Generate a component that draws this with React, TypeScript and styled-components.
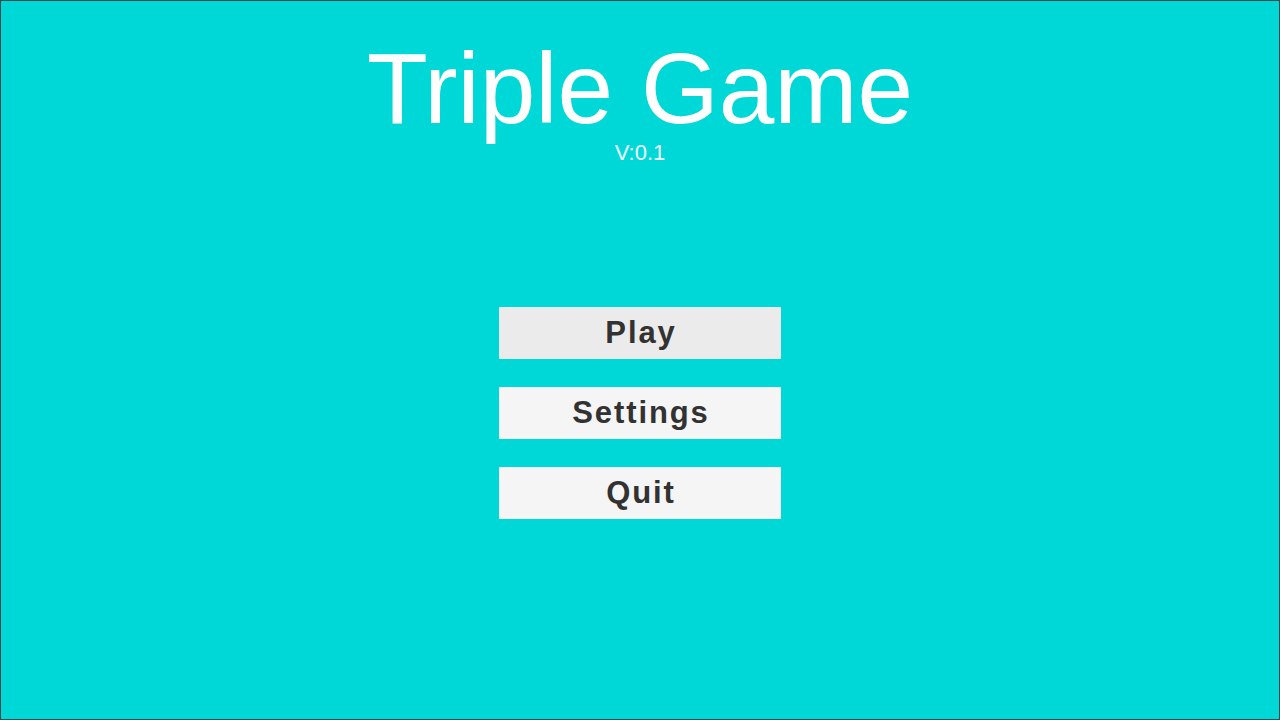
import React from "react";
import styled, { createGlobalStyle } from "styled-components";

const GlobalStyle = createGlobalStyle`
  html, body {
    margin: 0;
    padding: 0;
    background: #00d8d8;
  }
  * {
    box-sizing: border-box;
  }
`;

const Screen = styled.div`
  width: 1280px;
  height: 720px;
  background: #00d8d8;
  border: 1px solid #2a4a4a;
  display: flex;
  flex-direction: column;
  align-items: center;
  font-family: "Liberation Sans", Arial, sans-serif;
  overflow: hidden;
`;

const Header = styled.header`
  display: flex;
  flex-direction: column;
  align-items: center;
  padding-top: 35px;
`;

const Title = styled.h1`
  margin: 0;
  color: #ffffff;
  font-weight: 400;
  font-size: 100px;
  line-height: 104px;
`;

const Version = styled.span`
  color: #f2ffff;
  font-size: 22px;
  line-height: 26px;
`;

const Menu = styled.nav`
  display: flex;
  flex-direction: column;
  gap: 28px;
  margin-top: 141px;
`;

const MenuButton = styled.button<{ $active?: boolean }>`
  width: 282px;
  height: 52px;
  border: none;
  padding: 0 0 0 2px;
  background: ${(p) => (p.$active ? "#ebebeb" : "#f5f5f5")};
  color: #323232;
  font-family: "Liberation Sans", Arial, sans-serif;
  font-weight: 700;
  font-size: 31px;
  letter-spacing: 1.9px;
  cursor: pointer;
`;

const App = () => {
  return (
    <>
      <GlobalStyle />
      <Screen>
        <Header>
          <Title>Triple Game</Title>
          <Version>V:0.1</Version>
        </Header>
        <Menu>
          <MenuButton $active>Play</MenuButton>
          <MenuButton>Settings</MenuButton>
          <MenuButton>Quit</MenuButton>
        </Menu>
      </Screen>
    </>
  );
};

export default App;
